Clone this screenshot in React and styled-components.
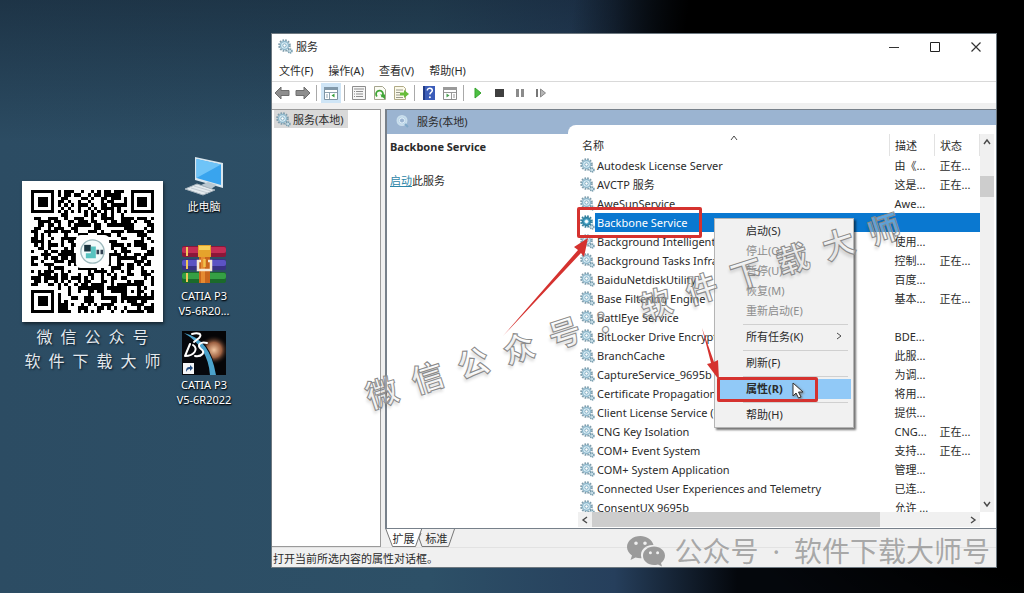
import React from "react";
import styled, { createGlobalStyle, css } from "styled-components";

const colours = {
  text: "#2b2b2b",
  muted: "#8c8c8c",
  line: "#9a9a9a",
  chrome: "#f0f0f0",
  header: "#9bb4d1",
  selected: "#0a78d0",
  hover: "#91c9f7",
  thumb: "#cdcdcd",
  alert: "#d5322f"
};

const GlobalStyle = createGlobalStyle`
  * {
    box-sizing: border-box;
  }
  body {
    margin: 0;
    font-family: "Noto Sans", "Noto Sans CJK SC", sans-serif;
    font-size: 11px;
    line-height: 15px;
    color: ${colours.text};
  }
  button {
    font: inherit;
    color: inherit;
    background: none;
    border: 0;
    padding: 0;
  }
`;

const Desktop = styled.div`
  position: relative;
  display: flex;
  height: 100vh;
  min-height: 480px;
  overflow: hidden;
  background:
    radial-gradient(ellipse 62% 120% at 110% 16%, #000 70%, transparent 88%),
    linear-gradient(180deg, rgba(8, 16, 28, 0.4), transparent 24%),
    linear-gradient(90deg, #2c4c63 0%, #2d5067 42%, #263f5c 60%, #04070c 72%);
`;

const QrCard = styled.div`
  flex: none;
  width: 141px;
  margin: 181px 7px 0 22px;
`;

const QrFrame = styled.div`
  padding: 9px;
  background: #fff;
  box-shadow: 1px 2px 3px rgba(0, 0, 0, 0.5);
  & > svg {
    display: block;
    width: 100%;
  }
`;

const QrCaption = styled.p`
  margin: 3px 0 0;
  font-size: 16px;
  line-height: 24px;
  text-align: center;
  white-space: nowrap;
  color: #e3e9ee;
  text-shadow: 1px 1px 2px #0c1a26;
`;

const Shortcuts = styled.div`
  flex: none;
  display: grid;
  grid-template-columns: 68px;
  grid-auto-rows: 77px;
  align-content: start;
  gap: 12px;
  margin: 153px 33px 0 0;
`;

const Shortcut = styled.button`
  display: flex;
  flex-direction: column;
  align-items: center;
  gap: 2px;
  color: #fff;
  white-space: pre-line;
  text-shadow: 0 1px 2px #000, 1px 1px 1px #0c1a26;
  & > svg {
    flex: none;
    display: block;
  }
`;

const Window = styled.main`
  position: relative;
  flex: 1;
  min-width: 0;
  display: flex;
  flex-direction: column;
  margin: 33px 27px 25px 0;
  border: 1px solid #6d7880;
  background: #fff;
`;

const TitleBar = styled.header`
  display: flex;
  align-items: center;
  height: 25px;
  padding-left: 6px;
  & > h1 {
    flex: 1;
    margin: 0 0 0 3px;
    font-size: 11px;
    font-weight: 400;
  }
`;

const WindowButton = styled.button`
  width: 41px;
  height: 25px;
  & > svg {
    display: block;
    margin: auto;
  }
`;

const MenuBar = styled.nav`
  display: flex;
  gap: 15px;
  height: 23px;
  padding-left: 7px;
  border-bottom: 1px solid #d9d9d9;
`;

const Toolbar = styled.div`
  display: flex;
  align-items: center;
  gap: 1px;
  height: 21px;
`;

const ToolButton = styled.button`
  width: 20px;
  height: 20px;
  background: ${props => (props.$active ? "#cfe5f6" : "none")};
  & > svg {
    display: block;
    margin: auto;
  }
`;

const Separator = styled.span`
  width: 1px;
  height: 16px;
  margin: 0 3px 0 2px;
  background: #a9a9a9;
`;

const Panes = styled.div`
  flex: 1;
  min-height: 0;
  display: grid;
  grid-template-columns: 109px 1fr;
  grid-template-rows: minmax(0, 1fr);
  gap: 4px;
  padding-top: 6px;
  background: ${colours.chrome};
`;

const Tree = styled.div`
  border: 1px solid ${colours.line};
  border-left: 0;
  background: #fff;
`;

const TreeItem = styled.button`
  display: flex;
  align-items: center;
  gap: 2px;
  height: 18px;
  margin-left: 2px;
  padding: 0 4px 0 2px;
  background: #d9d9d9;
`;

const Details = styled.div`
  display: flex;
  flex-direction: column;
  min-width: 0;
`;

const DetailsBox = styled.section`
  flex: 1;
  min-height: 0;
  display: flex;
  flex-direction: column;
  border: solid #77808a;
  border-width: 1px 0 1px 2px;
  background: #fff;
`;

const DetailsHeader = styled.div`
  flex: none;
  display: flex;
  align-items: center;
  gap: 7px;
  height: 24px;
  padding: 0 0 2px 8px;
  background: ${colours.header};
`;

const DetailsBody = styled.div`
  flex: 1;
  min-height: 0;
  display: grid;
  grid-template-columns: 181px 1fr;
  grid-template-rows: minmax(0, 1fr);
`;

const Summary = styled.div`
  padding: 5px 3px;
  & > h2 {
    margin: 0 0 19px;
    font-size: 11px;
    line-height: 15px;
  }
  & > p {
    margin: 0;
  }
  a {
    color: #2d86a8;
  }
`;

const List = styled.div`
  display: grid;
  grid-template-columns: 1fr 16px;
  grid-template-rows: minmax(0, 1fr) 15px;
  min-width: 0;
  margin-top: -9px;
  padding: 9px 0 1px 10px;
  border-top-left-radius: 8px;
  background: #fff;
`;

const ListView = styled.div`
  overflow: hidden;
`;

const Table = styled.table`
  width: 100%;
  table-layout: fixed;
  border-collapse: collapse;
  th,
  td {
    padding: 0 0 0 5px;
    font-weight: 400;
    text-align: left;
    white-space: nowrap;
  }
  th {
    position: relative;
    height: 22px;
    border-right: 1px solid #e2e2e2;
  }
  th:first-child {
    padding-left: 4px;
  }
  th > svg {
    position: absolute;
    top: 0;
    left: 50%;
    margin-left: -4px;
  }
`;

const Row = styled.tr`
  height: 19px;
  td:first-child {
    padding-left: 2px;
  }
  ${props =>
    props.$selected &&
    css`
      td + td,
      td span {
        background: ${colours.selected};
        color: #fff;
      }
    `}
`;

const ServiceName = styled.div`
  display: flex;
  align-items: center;
  & > span {
    flex: 1;
    padding: 2px;
  }
`;

const Scrollbar = styled.div`
  display: flex;
  flex-direction: ${props => (props.$vertical ? "column" : "row")};
  background: ${colours.chrome};
  ${props => props.$vertical && "margin-right: 2px;"}
  & > button {
    flex: none;
    display: grid;
    place-items: center;
    width: 14px;
    height: 16px;
  }
`;

const Track = styled.div`
  flex: 1;
  display: flex;
  flex-direction: inherit;
  ${props => props.$vertical && "padding-top: 26px;"}
`;

const Thumb = styled.div`
  flex: 0 0 ${props => props.$size};
  background: ${colours.thumb};
`;

const Tabs = styled.div`
  flex: none;
  display: flex;
  height: 18px;
`;

const Tab = styled.button`
  position: relative;
  width: 37px;
  margin-right: -4px;
  height: 18px;
  & > svg {
    position: absolute;
    inset: 0;
  }
  & > span {
    position: relative;
  }
`;

const StatusBar = styled.footer`
  height: 20px;
  padding: 3px 1px;
  border-top: 1px solid #e2e2e2;
  background: ${colours.chrome};
`;

const ContextMenu = styled.div`
  position: absolute;
  top: 184px;
  left: 442px;
  width: 140px;
  padding: 2px;
  border: 1px solid #b4b4b4;
  background: #f1f1f1;
  box-shadow: 2px 2px 2px rgba(0, 0, 0, 0.55);
  & > hr {
    height: 1px;
    margin: 3px 3px 2px 26px;
    border: 0;
    background: #d0d0d0;
  }
`;

const MenuItem = styled.button`
  display: flex;
  justify-content: space-between;
  align-items: center;
  width: 100%;
  height: 20px;
  padding: 0 8px 2px 29px;
  font-weight: ${props => (props.$active ? 700 : 400)};
  background: ${props => (props.$active ? colours.hover : "none")};
  &:disabled {
    color: ${colours.muted};
  }
`;

const Highlight = styled.div`
  position: absolute;
  top: ${props => props.$top}px;
  left: ${props => props.$left}px;
  width: ${props => props.$width}px;
  height: ${props => props.$height}px;
  border: 3px solid ${colours.alert};
  border-radius: 2px;
`;

const Drawing = styled.svg`
  position: absolute;
  top: ${props => props.$top}px;
  left: ${props => props.$left}px;
  filter: ${props => (props.$shadow ? "drop-shadow(1px 1px 1px #777)" : "none")};
`;

const Stamp = styled.div`
  position: absolute;
  top: 253px;
  left: 81px;
  font-size: 32px;
  line-height: 48px;
  font-weight: 700;
  white-space: nowrap;
  color: rgba(255, 255, 255, 0.35);
  -webkit-text-stroke: 1px #8a8a8a;
  text-shadow: -2px 3px 3px rgba(0, 0, 0, 0.12);
  transform: rotate(-18deg);
  pointer-events: none;
`;

const Credit = styled.div`
  position: absolute;
  right: 6px;
  bottom: 0;
  display: flex;
  align-items: center;
  gap: 9px;
  font-size: 28px;
  line-height: 30px;
  white-space: nowrap;
  color: rgba(120, 120, 120, 0.62);
  pointer-events: none;
`;

const GearIcon = ({ size = 15, dark }) => (
  <svg width={size} height={size} viewBox="0 0 15 15" fill="none">
    <circle cx="6.5" cy="6.5" r="5.4" stroke={dark ? "#34829f" : "#7f9dac"} strokeWidth="1.8" strokeDasharray="1.7 1.13" />
    <circle cx="6.5" cy="6.5" r="4" fill={dark ? "#3d9abd" : "#d8edf6"} stroke={dark ? "#2d7f9f" : "#8db6ca"} strokeWidth="1.4" />
    <circle cx="6.5" cy="6.5" r="1.7" fill="#fff" stroke={dark ? "#cbeefa" : "#6c9db5"} strokeWidth=".8" />
    <circle cx="12" cy="12" r="2" fill="#c5dce6" stroke="#6f96a8" strokeWidth="1.4" strokeDasharray="1.1 .6" />
  </svg>
);

const LensIcon = () => (
  <svg width="15" height="15" viewBox="0 0 15 15" fill="none">
    <circle cx="7" cy="6.5" r="4.6" fill="#b8d3e8" stroke="#c9deec" strokeWidth="1.8" />
    <circle cx="7" cy="6.5" r="2.6" fill="#9bb4d1" stroke="#e6f3fb" strokeWidth="1" />
    <path d="m10 10 3 3" stroke="#7fa7c8" strokeWidth="2" />
  </svg>
);

const Chevron = ({ d, size = 8, width = 1.4 }) => (
  <svg width={size} height={size} viewBox="0 0 8 8" fill="none" stroke="#4a4a4a" strokeWidth={width}>
    <path d={d} />
  </svg>
);

const UP = "M1 6l3-4 3 4";
const DOWN = "M1 2l3 4 3-4";
const LEFT = "M6 1L2 4l4 3";
const RIGHT = "M2 1l4 3-4 3";

const ToolIcon = ({ children }) => (
  <svg width="16" height="16" viewBox="0 0 16 16" fill="none">
    {children}
  </svg>
);

const arrow = "M1 8l6-6v3.5h8v5H7V14z";

const toolIcons = {
  back: <path d={arrow} fill="#8e8e8e" stroke="#6e6e6e" />,
  forward: <path d={arrow} transform="matrix(-1 0 0 1 16 0)" fill="#8e8e8e" stroke="#6e6e6e" />,
  tree: (
    <>
      <path d="M1.5 2.5h13v12h-13z" fill="#fff" stroke="#7e93a2" />
      <path d="M1 2h14v3H1z" fill="#8299aa" />
      <path d="M2 7.5h12M6.500 8v6M3 10h2M3 12h2" stroke="#8fa3b0" />
      <path d="M11.500 8.500v4l-3-2z" fill="#36a03c" />
    </>
  ),
  properties: (
    <>
      <path d="M1.500 1.500h13v13h-13z" fill="#f6f6f6" stroke="#8d8d8d" />
      <path d="M3 4h10M5 6.500h7M5 9h7M5 11.500h7M3 6.500h1M3 9h1M3 11.500h1" stroke="#8d8d8d" />
    </>
  ),
  refresh: (
    <>
      <path d="M2.500 1.500h8l3 3v10h-11z" fill="#fbfbf4" stroke="#a5a58e" />
      <path d="M5 11.500A3.500 3.500 0 1 1 9.500 12" stroke="#3fa535" strokeWidth="1.800" />
      <path d="M8 9.500h5v5z" fill="#3fa535" />
    </>
  ),
  export: (
    <>
      <path d="M1.500 1.500h9l2 2v11h-11z" fill="#fbf9ea" stroke="#b0aa86" />
      <path d="M3 5h7M3 7.500h4M3 10h4M3 12.500h7" stroke="#9a9a8c" />
      <path d="M7 7.500h4V5l5 4-5 4v-2.500H7z" fill="#67bd3a" />
    </>
  ),
  help: (
    <>
      <path d="M2 1h12v14H2z" fill="#3b5cb8" />
      <path d="M2 1h2v14H2z" fill="#233d88" />
      <path d="M6.300 5.500c0-3.200 5-3 5 0 0 2-2.400 1.900-2.400 4" stroke="#fff" strokeWidth="1.500" />
      <circle cx="8.900" cy="12.200" r="1" fill="#fff" />
    </>
  ),
  panel: (
    <>
      <path d="M1.500 2.500h13v12h-13z" fill="#fff" stroke="#8d8d8d" />
      <path d="M1 2h14v3H1z" fill="#9a9a9a" />
      <path d="M2 7.500h12M9.500 8v6M11 10h2M11 12h2" stroke="#999" />
      <path d="M4.500 8.500v4l3-2z" fill="#4a9d50" />
    </>
  ),
  play: <path d="M5 3l6 5-6 5z" fill="#4cc042" stroke="#36a32e" />,
  stop: <path d="M4 4h9v8H4z" fill="#3f3f3f" />,
  pause: <path d="M4 4h3v8H4zM9 4h3v8H9z" fill="#8b8b8b" />,
  restart: (
    <>
      <path d="M3 4h2v8H3z" fill="#777" />
      <path d="M7.500 4l5 4-5 4z" fill="#b5b5b5" stroke="#888" />
    </>
  )
};

const toolbar = [
  ["back", "后退"],
  ["forward", "前进"],
  null,
  ["tree", "显示/隐藏控制台树"],
  null,
  ["properties", "属性"],
  ["refresh", "刷新"],
  ["export", "导出列表"],
  null,
  ["help", "帮助"],
  ["panel", "显示/隐藏操作窗格"],
  null,
  ["play", "启动服务"],
  ["stop", "停止服务"],
  ["pause", "暂停服务"],
  ["restart", "重新启动服务"]
];

const services = [
  ["Autodesk License Server", "由《...", "正在..."],
  ["AVCTP 服务", "这是...", "正在..."],
  ["AweSunService", "Awe...", ""],
  ["Backbone Service", "", ""],
  ["Background Intelligent Transfer Service", "使用...", ""],
  ["Background Tasks Infrastructure Service", "控制...", "正在..."],
  ["BaiduNetdiskUtility", "百度...", ""],
  ["Base Filtering Engine", "基本...", "正在..."],
  ["BattlEye Service", "", ""],
  ["BitLocker Drive Encryption Service", "BDE...", ""],
  ["BranchCache", "此服...", ""],
  ["CaptureService_9695b", "为调...", ""],
  ["Certificate Propagation", "将用...", ""],
  ["Client License Service (ClipSVC)", "提供...", ""],
  ["CNG Key Isolation", "CNG...", "正在..."],
  ["COM+ Event System", "支持...", "正在..."],
  ["COM+ System Application", "管理...", ""],
  ["Connected User Experiences and Telemetry", "已连...", ""],
  ["ConsentUX 9695b", "允许 ...", ""]
];

const menu = [
  { label: "启动(S)" },
  { label: "停止(O)", disabled: true },
  { label: "暂停(U)", disabled: true },
  { label: "恢复(M)", disabled: true },
  { label: "重新启动(E)", disabled: true },
  null,
  { label: "所有任务(K)", more: true },
  null,
  { label: "刷新(F)" },
  null,
  { label: "属性(R)", active: true },
  null,
  { label: "帮助(H)" }
];

// square rings: three finders and the small alignment mark
const ring = (x, y, cx, cy, outer) => {
  const d = Math.max(Math.abs(x - cx), Math.abs(y - cy));
  if (d > outer) return null;
  return outer === 4 ? d !== 4 && d !== 2 : d !== 1;
};

const qrModule = (x, y) => {
  const marks = [
    ring(x, y, 3, 3, 4),
    ring(x, y, 33, 3, 4),
    ring(x, y, 3, 33, 4),
    ring(x, y, 30, 30, 2)
  ];
  const mark = marks.find(m => m !== null);
  if (mark !== undefined) return mark;
  if (x === 6 || y === 6) return (x + y) % 2 === 0;
  let h = (x * 374761393 + y * 668265263) | 0;
  h = Math.imul(h ^ (h >>> 13), 1274126177);
  return ((h ^ (h >>> 16)) & 255) > 122;
};

const QrCode = () => {
  let d = "";
  for (let y = 0; y < 37; y++) {
    for (let x = 0; x < 37; x++) {
      if (qrModule(x, y)) d += `M${x} ${y}h1v1h-1z`;
    }
  }
  return (
    <svg viewBox="0 0 37 37" role="img" aria-label="二维码">
      <path d={d} fill="#000" shapeRendering="crispEdges" />
      <rect x="13.500" y="13.500" width="10" height="10" rx="1.500" fill="#fff" />
      <circle cx="18.500" cy="18.500" r="3.500" fill="#f2fbfb" stroke="#9db9bd" strokeWidth=".400" />
      <path d="M16 16.500h2v2h-2z" fill="#1b3540" />
      <path d="M18 17h1.500v3.500H18zM16.500 19H18v1.500h-1.500z" fill="#58c3c0" />
      <path d="M19.700 18h.8v1.300h-.8zM20.900 18h.8v1.300h-.8z" fill="#345" />
    </svg>
  );
};

const ComputerIcon = () => (
  <svg width="44" height="44" viewBox="0 0 44 44">
    <path d="M13 4l28 6v25l-28-8z" fill="#d9e6ee" />
    <path d="M14.500 6L39 11.500V32l-24.500-7z" fill="#39a4ee" />
    <path d="M14.500 6L39 11.500 14.500 25z" fill="#6fc4f8" />
    <path d="M19 32l7-3 9 3-6 4z" fill="#b9c7d0" />
    <path d="M3 36l12-5 18 6-12 5z" fill="#e4eaee" stroke="#a7b4bd" />
    <path d="M9 35l17 5M12 33l17 5" stroke="#c3ccd3" />
  </svg>
);

const ArchiveIcon = () => (
  <svg width="44" height="44" viewBox="0 0 44 44">
    {[
      ["#c32d55", "#8b1739", 4],
      ["#5c53c4", "#393184", 17],
      ["#35a044", "#1b6a2b", 30]
    ].map(([light, dark, y]) => (
      <g key={y}>
        <rect x="0" y={y} width="44" height="11" rx="2" fill={dark} />
        <rect x="0" y={y + 1} width="44" height="6" rx="2" fill={light} />
        <path d={`M5 ${y + 1}v9`} stroke="#f2c75a" strokeWidth="2" />
      </g>
    ))}
    <path d="M16 3h13v12H16z" fill="#e5a32c" />
    <path d="M17 4h11v4H17z" fill="#f7cf5a" />
    <path d="M17 15h11v26H17z" fill="#c8651c" />
    <path d="M19 15h4v26h-4z" fill="#e58a30" />
    <path d="M19 19h-3v9h13v-9h-3" fill="none" stroke="#f5e8d4" strokeWidth="2.500" />
    <path d="M22.500 17v8" stroke="#f2c14b" strokeWidth="2.500" />
  </svg>
);

const CatiaIcon = () => (
  <svg width="44" height="44" viewBox="0 0 44 44">
    <defs>
      <radialGradient id="nebula">
        <stop offset="0" stopColor="#f2c6a0" />
        <stop offset=".5" stopColor="#9d6142" />
        <stop offset="1" stopColor="#050507" stopOpacity="0" />
      </radialGradient>
    </defs>
    <rect width="44" height="44" fill="#050507" />
    <circle cx="32" cy="19" r="15" fill="url(#nebula)" />
    <path d="M0 2Q30 6 34 44H0z" fill="#06080d" />
    <path d="M2 2Q28 8 34 44h-6Q26 16 2 2z" fill="#4ba3cc" />
    <g fill="none" stroke="#fff" strokeWidth="2" strokeLinecap="round" strokeLinejoin="round">
      <path d="M10 3c6-2 11 0 7 4l-5 4" />
      <path d="M8 13L3 25c9 0 14-7 8-11" />
      <path d="M25 12c-6-2-11 2-6 6 5 3 1 8-6 7" />
    </g>
    <path d="M1 32h11v11H1z" fill="#f4f6f8" />
    <path d="M4 41c0-4 1-5 4-5v-2l3 3-3 3v-2c-2 0-3 1-4 3z" fill="#254f84" />
  </svg>
);

const shortcuts = [
  ["此电脑", ComputerIcon],
  ["CATIA P3\nV5-6R20...", ArchiveIcon],
  ["CATIA P3\nV5-6R2022", CatiaIcon]
];

const App = () => (
  <>
    <GlobalStyle />
    <Desktop>
      <QrCard>
        <QrFrame>
          <QrCode />
        </QrFrame>
        <QrCaption>
          {"微\u2002信\u2002公\u2002众\u2002号"}
          <br />
          {"软\u2002件\u2002下\u2002载\u2002大\u2002师"}
        </QrCaption>
      </QrCard>
      <Shortcuts>
        {shortcuts.map(([label, Icon]) => (
          <Shortcut key={label}>
            <Icon />
            {label}
          </Shortcut>
        ))}
      </Shortcuts>

      <Window>
        <TitleBar>
          <GearIcon />
          <h1>服务</h1>
          <WindowButton aria-label="最小化">
            <svg width="10" height="10" stroke="#333"><path d="M0 5.500h10" /></svg>
          </WindowButton>
          <WindowButton aria-label="最大化">
            <svg width="10" height="10" fill="none" stroke="#222"><path d="M.5.5h9v9h-9z" /></svg>
          </WindowButton>
          <WindowButton aria-label="关闭">
            <svg width="10" height="10" stroke="#333" strokeWidth="1.200"><path d="M.5.5l9 9M9.500.5l-9 9" /></svg>
          </WindowButton>
        </TitleBar>
        <MenuBar>
          {["文件(F)", "操作(A)", "查看(V)", "帮助(H)"].map(label => (
            <button key={label}>{label}</button>
          ))}
        </MenuBar>
        <Toolbar>
          {toolbar.map((tool, i) =>
            tool ? (
              <ToolButton key={i} aria-label={tool[1]} $active={tool[0] === "tree"}>
                <ToolIcon>{toolIcons[tool[0]]}</ToolIcon>
              </ToolButton>
            ) : (
              <Separator key={i} />
            )
          )}
        </Toolbar>

        <Panes>
          <Tree>
            <TreeItem>
              <GearIcon />
              服务(本地)
            </TreeItem>
          </Tree>
          <Details>
            <DetailsBox>
              <DetailsHeader>
                <LensIcon />
                服务(本地)
              </DetailsHeader>
              <DetailsBody>
                <Summary>
                  <h2>Backbone Service</h2>
                  <p>
                    <a href="#start">启动</a>此服务
                  </p>
                </Summary>
                <List>
                  <ListView>
                    <Table>
                      <colgroup>
                        <col />
                        <col width="45" />
                        <col width="45" />
                      </colgroup>
                      <thead>
                        <tr>
                          <th>
                            名称
                            <Chevron d={UP} width={1} />
                          </th>
                          <th>描述</th>
                          <th>状态</th>
                        </tr>
                      </thead>
                      <tbody>
                        {services.map(([name, description, status], i) => (
                          <Row key={name} $selected={i === 3}>
                            <td>
                              <ServiceName>
                                <GearIcon dark={i === 3} />
                                <span>{name}</span>
                              </ServiceName>
                            </td>
                            <td>{description}</td>
                            <td>{status}</td>
                          </Row>
                        ))}
                      </tbody>
                    </Table>
                  </ListView>
                  <Scrollbar $vertical>
                    <button aria-label="向上滚动"><Chevron d={UP} /></button>
                    <Track $vertical>
                      <Thumb $size="21px" />
                    </Track>
                    <button aria-label="向下滚动"><Chevron d={DOWN} /></button>
                  </Scrollbar>
                  <Scrollbar>
                    <button aria-label="向左滚动"><Chevron d={LEFT} /></button>
                    <Track>
                      <Thumb $size="77%" />
                    </Track>
                    <button aria-label="向右滚动"><Chevron d={RIGHT} /></button>
                  </Scrollbar>
                </List>
              </DetailsBody>
            </DetailsBox>
            <Tabs>
              <Tab>
                <svg width="37" height="18" fill="#fff" stroke="#777"><path d="M.5-1l7 18.500h23L37-1z" /></svg>
                <span>扩展</span>
              </Tab>
              <Tab>
                <svg width="37" height="18" fill="none" stroke="#777"><path d="M3 4l-2 5 3 8.500h26.500L36.500 0" /></svg>
                <span>标准</span>
              </Tab>
            </Tabs>
          </Details>
        </Panes>
        <StatusBar>打开当前所选内容的属性对话框。</StatusBar>

        <ContextMenu>
          {menu.map((item, i) =>
            item ? (
              <MenuItem key={i} disabled={item.disabled} $active={item.active}>
                {item.label}
                {item.more && <Chevron d={RIGHT} width={1} />}
              </MenuItem>
            ) : (
              <hr key={i} />
            )
          )}
        </ContextMenu>

        <Stamp>{"微\u2002信\u2002公\u2002众\u2002号\u2002：\u2002软\u2002件\u2002下\u2002载\u2002大\u2002师"}</Stamp>
        <Highlight $top={173} $left={305} $width={125} $height={31} />
        <Highlight $top={343} $left={445} $width={101} $height={25} />
        <Drawing $top={202} $left={230} width="88" height="102">
          <path d="M1 100L76 14l-4-3L86 2l-4 19-3-4z" fill={colours.alert} />
        </Drawing>
        <Drawing $top={294} $left={429} width="22" height="54">
          <path d="M1 0l12 34 4-2 1 20-12-16 4-1z" fill={colours.alert} />
        </Drawing>
        <Drawing $top={348} $left={520} $shadow width="14" height="18">
          <path d="M1 1v13l3-3 2.500 5 2.500-1-2.500-5h4.500z" fill="#fff" stroke="#333" />
        </Drawing>
        <Credit>
          <svg width="38" height="32" viewBox="0 0 38 32" fill="#9b9b9b">
            <path
              fillRule="evenodd"
              d="M13.500 1C6 1 0 5.800 0 12c0 3.500 2 6.500 5 8.500L3.500 25l5-2.500c2 .6 4 .8 6 .7C12 15 19 9.500 26.500 10 25 4.500 19.500 1 13.500 1zM9 6.500a1.800 1.800 0 1 1 0 3.600 1.800 1.800 0 0 1 0-3.600zm9 0a1.800 1.800 0 1 1 0 3.600 1.800 1.800 0 0 1 0-3.600z"
            />
            <path
              fillRule="evenodd"
              d="M27 11.500c-6 0-11 4-11 9.200s5 9.300 11 9.300c1.300 0 2.700-.2 4-.6l4 2.100-1-3.600c2.400-1.700 4-4.300 4-7.200 0-5.200-5-9.200-11-9.200zm-3.600 4.700a1.500 1.500 0 1 1 0 3 1.500 1.500 0 0 1 0-3zm7.200 0a1.500 1.500 0 1 1 0 3 1.500 1.500 0 0 1 0-3z"
            />
          </svg>
          {"公众号\u2002·\u2002软件下载大师号"}
        </Credit>
      </Window>
    </Desktop>
  </>
);

export default App;
